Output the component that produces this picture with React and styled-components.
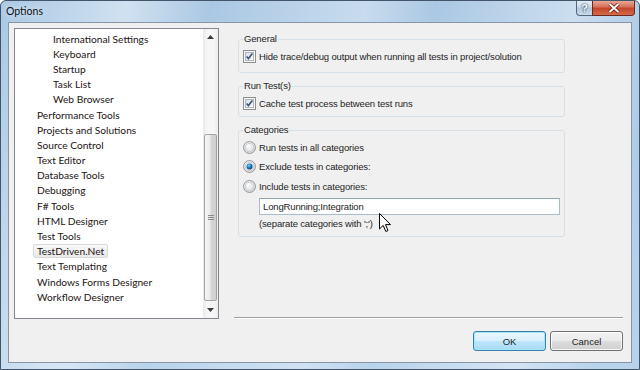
import React from "react";
import styled, { createGlobalStyle, css } from "styled-components";

const GlobalStyle = createGlobalStyle`
    html, body {
        margin: 0;
        padding: 0;
        background: #ffffff;
    }
    * {
        box-sizing: border-box;
    }
`;

const treeItems = [
    { label: "International Settings", child: true },
    { label: "Keyboard", child: true },
    { label: "Startup", child: true },
    { label: "Task List", child: true },
    { label: "Web Browser", child: true },
    { label: "Performance Tools" },
    { label: "Projects and Solutions" },
    { label: "Source Control" },
    { label: "Text Editor" },
    { label: "Database Tools" },
    { label: "Debugging" },
    { label: "F# Tools" },
    { label: "HTML Designer" },
    { label: "Test Tools" },
    { label: "TestDriven.Net", selected: true },
    { label: "Text Templating" },
    { label: "Windows Forms Designer" },
    { label: "Workflow Designer" },
];

const CheckBox = () => (
    <svg width="13" height="13" viewBox="0 0 13 13">
        <defs>
            <linearGradient id="cbg" x1="0" y1="0" x2="1" y2="1">
                <stop offset="0" stopColor="#d9dde2" />
                <stop offset="1" stopColor="#fbfbfb" />
            </linearGradient>
        </defs>
        <rect x="0.5" y="0.5" width="12" height="12" fill="#f4f4f4" stroke="#8f8f8f" />
        <rect x="2.5" y="2.5" width="8" height="8" fill="url(#cbg)" stroke="#b4b8bd" />
        <path d="M3.6 6.4 L5.4 8.6 L9.4 3.4" fill="none" stroke="#40577e" strokeWidth="1.6" />
    </svg>
);

const Radio = ({ checked }) => (
    <svg width="13" height="13" viewBox="0 0 13 13">
        <defs>
            <radialGradient id="rbg" cx="0.4" cy="0.35" r="0.7">
                <stop offset="0" stopColor="#ffffff" />
                <stop offset="1" stopColor="#d2d4d8" />
            </radialGradient>
            <radialGradient id="rdot" cx="0.4" cy="0.35" r="0.7">
                <stop offset="0" stopColor="#7fd0f6" />
                <stop offset="0.5" stopColor="#1b7ac0" />
                <stop offset="1" stopColor="#0d3d6e" />
            </radialGradient>
        </defs>
        <circle cx="6.5" cy="6.5" r="6" fill="url(#rbg)" stroke="#969a9f" />
        <circle cx="6.5" cy="6.5" r="4.2" fill="none" stroke="#c7cbd0" />
        {checked && <circle cx="6.5" cy="6.5" r="3" fill="url(#rdot)" />}
    </svg>
);

const App = () => {
    return (
        <>
            <GlobalStyle />
            <Window>
                <TitleBar>
                    <Title>Options</Title>
                    <Caption>
                        <HelpButton>?</HelpButton>
                        <CloseButton>
                            <svg width="12" height="10" viewBox="0 0 12 10">
                                <path
                                    d="M1.5 1 L10.5 9 M10.5 1 L1.5 9"
                                    stroke="#5a2015"
                                    strokeWidth="3.4"
                                />
                                <path
                                    d="M1.5 1 L10.5 9 M10.5 1 L1.5 9"
                                    stroke="#ffffff"
                                    strokeWidth="1.8"
                                />
                            </svg>
                        </CloseButton>
                    </Caption>
                </TitleBar>
                <Client>
                    <Body>
                        <TreeBox>
                            <TreeList>
                                {treeItems.map((item) => (
                                    <TreeRow key={item.label} $child={item.child}>
                                        <TreeLabel $selected={item.selected}>{item.label}</TreeLabel>
                                    </TreeRow>
                                ))}
                            </TreeList>
                            <ScrollBar>
                                <ScrollArrow>
                                    <svg width="7" height="4" viewBox="0 0 7 4">
                                        <path d="M0 4 L3.5 0 L7 4 Z" fill="#3c3c3c" />
                                    </svg>
                                </ScrollArrow>
                                <Track>
                                    <Thumb>
                                        <Grip />
                                    </Thumb>
                                </Track>
                                <ScrollArrow>
                                    <svg width="7" height="4" viewBox="0 0 7 4">
                                        <path d="M0 0 L7 0 L3.5 4 Z" fill="#3c3c3c" />
                                    </svg>
                                </ScrollArrow>
                            </ScrollBar>
                        </TreeBox>
                        <Pane>
                            <Groups>
                                <Group $pb={9}>
                                    <Legend>General</Legend>
                                    <OptionRow>
                                        <CheckBox />
                                        <span>Hide trace/debug output when running all tests in project/solution</span>
                                    </OptionRow>
                                </Group>
                                <Group $pb={6}>
                                    <Legend>Run Test(s)</Legend>
                                    <OptionRow>
                                        <CheckBox />
                                        <span>Cache test process between test runs</span>
                                    </OptionRow>
                                </Group>
                                <Group $pb={6}>
                                    <Legend>Categories</Legend>
                                    <RadioList>
                                        <OptionRow>
                                            <Radio />
                                            <span>Run tests in all categories</span>
                                        </OptionRow>
                                        <OptionRow>
                                            <Radio checked />
                                            <span>Exclude tests in categories:</span>
                                        </OptionRow>
                                        <OptionRow>
                                            <Radio />
                                            <span>Include tests in categories:</span>
                                        </OptionRow>
                                    </RadioList>
                                    <Indented>
                                        <TextBox defaultValue="LongRunning;Integration" />
                                        <Hint>(separate categories with ';')</Hint>
                                    </Indented>
                                </Group>
                            </Groups>
                            <Separator />
                        </Pane>
                    </Body>
                    <Footer>
                        <Button $default>OK</Button>
                        <Button>Cancel</Button>
                    </Footer>
                </Client>
                <Cursor width="13" height="20" viewBox="0 0 13 20">
                    <path
                        d="M0.5 0.5 L0.5 16 L4.2 12.4 L6.8 18.5 L9 17.5 L6.5 11.6 L11.5 11.6 Z"
                        fill="#ffffff"
                        stroke="#000000"
                        strokeWidth="1"
                        strokeLinejoin="round"
                    />
                </Cursor>
            </Window>
        </>
    );
};

const Window = styled.div`
    position: relative;
    width: 640px;
    height: 370px;
    display: flex;
    flex-direction: column;
    padding: 0 7px 6px 7px;
    border: 1px solid #42556b;
    border-radius: 6px 6px 0 0;
    background:
        linear-gradient(100deg, rgba(255, 255, 255, 0) 0%, rgba(255, 255, 255, 0.45) 18%, rgba(255, 255, 255, 0) 30%,
            rgba(255, 255, 255, 0.35) 52%, rgba(255, 255, 255, 0) 62%, rgba(255, 255, 255, 0.4) 82%, rgba(255, 255, 255, 0) 94%),
        linear-gradient(180deg, #aac8e4 0%, #b8d3ec 100%);
    overflow: hidden;
`;

const TitleBar = styled.div`
    height: 21px;
    display: flex;
    justify-content: space-between;
    align-items: flex-start;
    margin: 0 -3px 0 -2px;
`;

const Title = styled.div`
    font-family: Lato, "Noto Sans", sans-serif;
    font-size: 10.5px;
    color: #101010;
    line-height: 21px;
    text-shadow: 0 0 6px rgba(255, 255, 255, 0.9);
`;

const Caption = styled.div`
    display: flex;
    height: 16px;
    margin-top: -1px;
`;

const captionButton = css`
    height: 16px;
    display: flex;
    align-items: center;
    justify-content: center;
    border: 1px solid #55677c;
    border-top: none;
`;

const HelpButton = styled.div`
    ${captionButton};
    width: 16px;
    border-right: none;
    border-radius: 0 0 0 4px;
    background: linear-gradient(180deg, #e6eef6 0%, #cbdbea 48%, #b3c8dd 52%, #c9dcec 100%);
    font-family: "Liberation Sans", sans-serif;
    font-weight: bold;
    font-size: 11px;
    color: #ffffff;
    text-shadow: 0 0 2px #2c3e55, 0 0 1px #2c3e55;
`;

const CloseButton = styled.div`
    ${captionButton};
    width: 43px;
    border-color: #6a2a1e;
    border-radius: 0 0 4px 0;
    background: linear-gradient(180deg, #eab0a0 0%, #d8735c 45%, #c4452a 55%, #d66a48 100%);
`;

const Client = styled.div`
    flex: 1;
    display: flex;
    flex-direction: column;
    padding: 5px 8px 11px 5px;
    background: #f0f0f0;
    border: 1px solid #8795a6;
`;

const Body = styled.div`
    display: flex;
    gap: 15px;
    height: 291px;
`;

const TreeBox = styled.div`
    width: 205px;
    display: flex;
    background: #ffffff;
    border: 1px solid #828790;
`;

const TreeList = styled.div`
    flex: 1;
    padding-top: 2px;
    font-family: Lato, "Noto Sans", sans-serif;
    font-size: 10.2px;
    color: #1c1414;
`;

const TreeRow = styled.div`
    height: 15.2px;
    display: flex;
    align-items: center;
    padding-left: ${(p) => (p.$child ? "34px" : "18px")};
`;

const TreeLabel = styled.span`
    height: 14px;
    line-height: 12px;
    padding: 0 3px;
    border: 1px solid transparent;
    border-radius: 2px;
    white-space: nowrap;

    ${(p) =>
        p.$selected &&
        css`
            border-color: #d9d9d9;
            background: linear-gradient(180deg, #f8f8f8 0%, #e9e9e9 100%);
        `}
`;

const ScrollBar = styled.div`
    width: 15px;
    display: flex;
    flex-direction: column;
    background: linear-gradient(90deg, #e9e9e9 0%, #f6f6f6 30%, #f6f6f6 70%, #ececec 100%);
`;

const ScrollArrow = styled.div`
    height: 16px;
    display: flex;
    align-items: center;
    justify-content: center;
`;

const Track = styled.div`
    flex: 1;
    display: flex;
    flex-direction: column;
    justify-content: flex-end;
    padding: 0 1px 1px 1px;
`;

const Thumb = styled.div`
    height: 167px;
    display: flex;
    align-items: center;
    justify-content: center;
    border: 1px solid #a3a3a3;
    border-radius: 2px;
    background: linear-gradient(90deg, #f4f4f4 0%, #ececec 45%, #d6d6d6 55%, #cfcfcf 100%);
`;

const Grip = styled.div`
    width: 6px;
    height: 5px;
    border-top: 1px solid #8a8a8a;
    border-bottom: 1px solid #8a8a8a;
    background: linear-gradient(180deg, transparent 40%, #8a8a8a 40%, #8a8a8a 60%, transparent 60%);
`;

const Pane = styled.div`
    flex: 1;
    display: flex;
    flex-direction: column;
    justify-content: space-between;
`;

const Groups = styled.div`
    width: 331px;
    display: flex;
    flex-direction: column;
    gap: 7px;
    padding: 5px 0 0 4px;
    font-family: "Liberation Sans", Arial, sans-serif;
    font-size: 9.5px;
    letter-spacing: -0.15px;
    color: #1e1e1e;
`;

const Group = styled.fieldset`
    margin: 0;
    padding: 4px 4px ${(p) => p.$pb}px 4px;
    border: 1px solid #d5dfe5;
    border-radius: 3px;
    min-width: 0;
`;

const Legend = styled.legend`
    padding: 0 1px;
    line-height: 12px;
    color: #1e1e1e;
`;

const OptionRow = styled.div`
    height: 14px;
    display: flex;
    align-items: center;
    gap: 3px;
    white-space: nowrap;

    svg {
        flex: none;
    }
`;

const RadioList = styled.div`
    display: flex;
    flex-direction: column;
    gap: 5.5px;
`;

const Indented = styled.div`
    display: flex;
    flex-direction: column;
    padding-left: 16px;
    margin-top: 5px;
`;

const TextBox = styled.input`
    width: 301px;
    height: 17px;
    padding: 0 3px;
    border: 1px solid #a9bccc;
    border-top-color: #8fa5b8;
    background: #ffffff;
    font-family: "Liberation Sans", Arial, sans-serif;
    font-size: 9.5px;
    letter-spacing: -0.15px;
    color: #1e1e1e;

    &:focus {
        outline: none;
    }
`;

const Hint = styled.div`
    margin-top: 3px;
    line-height: 12px;
`;

const Separator = styled.div`
    height: 2px;
    border-top: 1px solid #a0a0a0;
    border-bottom: 1px solid #ffffff;
`;

const Footer = styled.div`
    display: flex;
    justify-content: flex-end;
    gap: 4px;
    margin-top: 12px;
`;

const Button = styled.button`
    width: 73px;
    height: 20px;
    padding: 0;
    border: 1px solid #707070;
    border-radius: 3px;
    background: linear-gradient(180deg, #f2f2f2 0%, #ebebeb 48%, #dddddd 52%, #cfcfcf 100%);
    box-shadow: inset 0 0 0 1px rgba(255, 255, 255, 0.8);
    font-family: "Liberation Sans", Arial, sans-serif;
    font-size: 9.5px;
    color: #1e1e1e;
    cursor: pointer;

    ${(p) =>
        p.$default &&
        css`
            border-color: #3c7fb1;
            background: linear-gradient(180deg, #eaf6fd 0%, #d9f0fc 48%, #bee6fd 52%, #a7d9f5 100%);
            box-shadow: inset 0 0 0 1px #9ee8fb;
        `}
`;

const Cursor = styled.svg`
    position: absolute;
    left: 378px;
    top: 212px;
`;

export default App;
